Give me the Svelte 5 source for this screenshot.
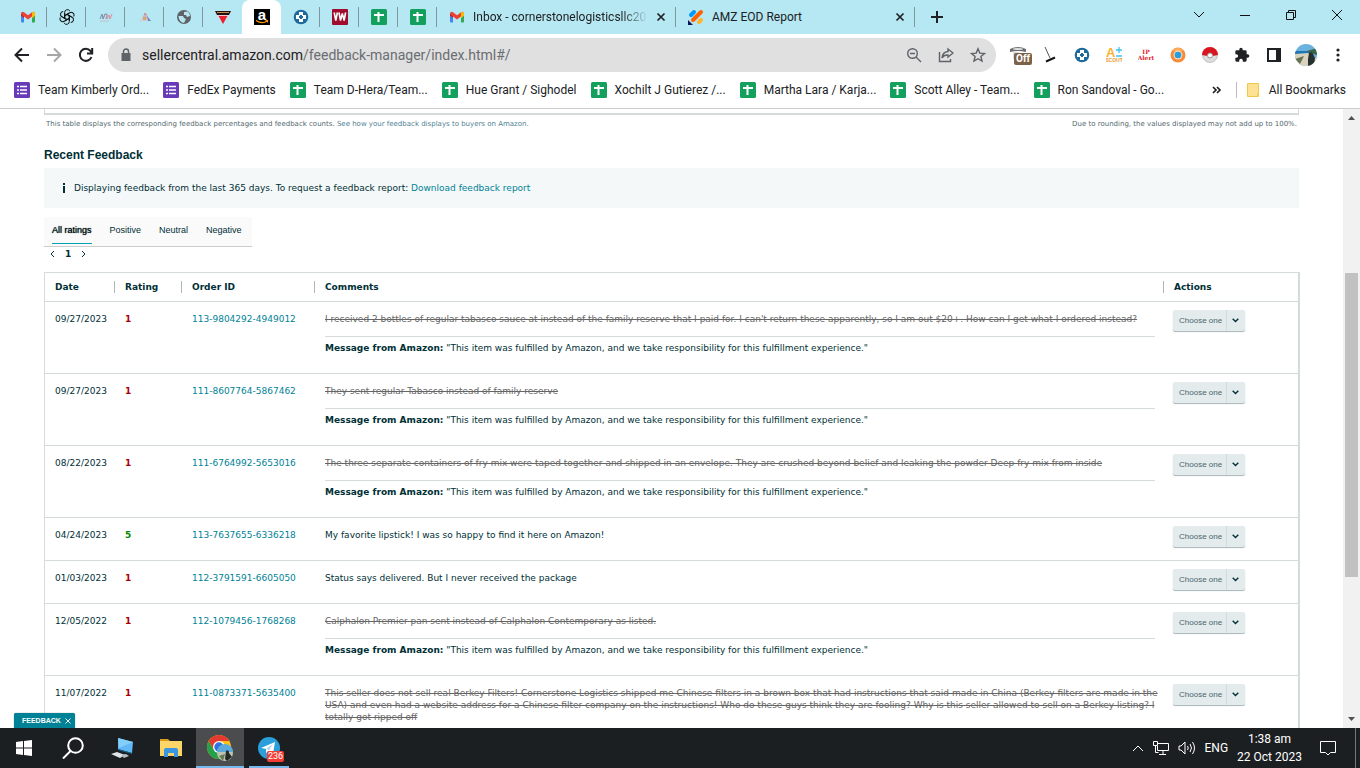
<script>
    const pinned = ['gmail', 'gpt', 'nw', 'spark', 'globe', 'triangle', 'amazon', 'cross', 'vw', 'sheet', 'sheet'];

    const bookmarks = [
        {icon: 'form', label: 'Team Kimberly Ord...'},
        {icon: 'form', label: 'FedEx Payments'},
        {icon: 'sheet', label: 'Team D-Hera/Team...'},
        {icon: 'sheet', label: 'Hue Grant / Sighodel'},
        {icon: 'sheet', label: 'Xochilt J Gutierez /...'},
        {icon: 'sheet', label: 'Martha Lara / Karja...'},
        {icon: 'sheet', label: 'Scott Alley - Team...'},
        {icon: 'sheet', label: 'Ron Sandoval - Go...'}
    ];

    const extensions = ['off', 'broom', 'cross', 'scout', 'alert', 'ring', 'ball', 'puzzle', 'panel', 'avatar', 'dots'];
    const filters = ['All ratings', 'Positive', 'Neutral', 'Negative'];
    const columns = ['Date', 'Rating', 'Order ID', 'Comments', 'Actions'];

    const rows = [
        {date: '09/27/2023', rating: 1, order: '113-9804292-4949012', struck: true, message: true,
            comment: "I received 2 bottles of regular tabasco sauce at instead of the family reserve that I paid for. I can't return these apparently, so I am out $20+. How can I get what I ordered instead?"},
        {date: '09/27/2023', rating: 1, order: '111-8607764-5867462', struck: true, message: true,
            comment: 'They sent regular Tabasco instead of family reserve'},
        {date: '08/22/2023', rating: 1, order: '111-6764992-5653016', struck: true, message: true,
            comment: 'The three separate containers of fry mix were taped together and shipped in an envelope. They are crushed beyond belief and leaking the powder Deep fry mix from inside'},
        {date: '04/24/2023', rating: 5, order: '113-7637655-6336218',
            comment: 'My favorite lipstick! I was so happy to find it here on Amazon!'},
        {date: '01/03/2023', rating: 1, order: '112-3791591-6605050',
            comment: 'Status says delivered. But I never received the package'},
        {date: '12/05/2022', rating: 1, order: '112-1079456-1768268', struck: true, message: true,
            comment: 'Calphalon Premier pan sent instead of Calphalon Contemporary as listed.'},
        {date: '11/07/2022', rating: 1, order: '111-0873371-5635400', struck: true,
            comment: 'This seller does not sell real Berkey Filters! Cornerstone Logistics shipped me Chinese filters in a brown box that had instructions that said made in China (Berkey filters are made in the USA) and even had a website address for a Chinese filter company on the instructions! Who do these guys think they are fooling? Why is this seller allowed to sell on a Berkey listing? I totally got ripped off'}
    ];

    let activeTab = $state(6);
    let filter = $state('All ratings');
    let feedbackOpen = $state(true);
</script>

{#snippet icon(name)}
    {#if name === 'gmail'}
        <svg width="16" height="16" viewBox="0 0 16 16">
            <path d="M1 4v8.500q0 1 1 1h2V7z" fill="#4285f4" />
            <path d="M15 4v8.500q0 1-1 1h-2V7z" fill="#34a853" />
            <path d="M1 4.500v2L4 9V5z" fill="#c5221f" />
            <path d="M15 4.500v2L12 9V5z" fill="#fbbc04" />
            <path d="M1 4.800C1 2.600 2.900 2.200 4 3.200l4 3 4-3c1.100-1 3-.6 3 1.600L12 7.500 8 10.500 4 7.500z" fill="#ea4335" />
            <path d="M12 3.200c1.100-1 3-.6 3 1.600V6.500L12 9z" fill="#fbbc04" />
        </svg>
    {:else if name === 'gpt'}
        <svg width="16" height="16" viewBox="0 0 24 24" fill="none" stroke="#111" stroke-width="1.500">
            {#each [0, 60, 120, 180, 240, 300] as turn}
                <path transform="rotate({turn} 12 12)" d="M8.500 14V5.200a4.200 4.200 0 0 1 7.800-2.200M8.500 10l3.500-2 6.500 3.700" />
            {/each}
        </svg>
    {:else if name === 'nw'}
        <svg width="16" height="16" viewBox="0 0 16 16" fill="none" stroke-width="1">
            <path d="M2 10l2-5 1 5 2-5" stroke="#7f8fae" />
            <path d="M5 10l2-5h2l-1 5" stroke="#8894ad" />
            <path d="M9 5l0 5 2-4 1 4 2-5" stroke="#dc8f9e" />
            <path d="M2 12h9" stroke="#c3bfce" />
        </svg>
    {:else if name === 'spark'}
        <svg width="16" height="16" viewBox="0 0 16 16">
            <path d="M5 9l3-5 2 1 1 5z" fill="#c3b6c9" />
            <path d="M2 12l5-4 6 4z" fill="#c9cfdd" />
            <path d="M6 8h3v3H6z" fill="#e0a25f" />
            <path d="M10 7l4 5h-3z" fill="#7583bb" />
            <circle cx="8" cy="5" r="1" fill="#d78080" />
        </svg>
    {:else if name === 'globe'}
        <svg width="16" height="16" viewBox="0 0 16 16">
            <circle cx="8" cy="8" r="7" fill="#5f6368" />
            <path d="M2.500 7l4.500 0 1 2 2 1-1 2-1 2Q3 13 2.500 7zM8 3l4-.5Q14 5 14 7l-3 1-1-2-2 0z" fill="#b6e7f1" />
        </svg>
    {:else if name === 'triangle'}
        <svg width="16" height="16" viewBox="0 0 16 16">
            <path d="M0 2h16l-2 4H2z" fill="#211" />
            <path d="M2 3h12v1H2z" fill="#c98e4c" />
            <path d="M3 6h10l-5 9z" fill="#ef1c2c" />
            <path d="M3 6h10v1H3z" fill="#f6c9cf" />
        </svg>
    {:else if name === 'amazon'}
        <svg width="16" height="16" viewBox="0 0 16 16">
            <rect width="16" height="16" fill="#000" />
            <text x="8" y="11" text-anchor="middle" class="glyph amazon">a</text>
            <path d="M2 11.500q6 4 11 .5M11.500 11.500h2v2" fill="none" stroke="#f90" stroke-width="1.200" />
        </svg>
    {:else if name === 'cross'}
        <svg width="16" height="16" viewBox="0 0 16 16">
            <circle cx="8" cy="8" r="7.300" fill="#1f6a9c" />
            <path d="M6 3h4v3h3v4h-3v3H6v-3H3V6h3z" fill="#fff" />
            <path d="M7 6h2v1h1v2H9v1H7V9H6V7h1z" fill="#1f6a9c" />
        </svg>
    {:else if name === 'vw'}
        <svg width="16" height="16" viewBox="0 0 16 16">
            <rect width="16" height="16" rx="1" fill="#a00c2c" />
            <path d="M2.200 3.500l1.600 8 1.600-8M7 3.500l1.500 8L10.300 4.500l1.800 7 1.500-8" fill="none" stroke="#fff" stroke-width="1.600" />
        </svg>
    {:else if name === 'sheet'}
        <svg width="16" height="16" viewBox="0 0 16 16">
            <rect width="16" height="16" rx="1.500" fill="#12a05c" />
            <path d="M3 6h10M7.500 3v10" stroke="#fff" stroke-width="2" />
        </svg>
    {:else if name === 'form'}
        <svg width="16" height="16" viewBox="0 0 16 16">
            <rect width="16" height="16" rx="1.500" fill="#673ab7" />
            <path d="M3 4.500h2M6 4.500h7M3 8h2M6 8h7M3 11.500h2M6 11.500h7" stroke="#fff" stroke-width="1.600" />
        </svg>
    {:else if name === 'jot'}
        <svg width="16" height="16" viewBox="0 0 16 16" stroke-width="4" stroke-linecap="round">
            <path d="M3 6l3-3" stroke="#0099ff" />
            <path d="M5 11l8-8" stroke="#ff6100" />
            <path d="M11 13l2-2" stroke="#ffb629" />
            <path d="M0 11v5h5z" fill="#0a1551" stroke="none" />
        </svg>
    {:else if name === 'off'}
        <span class="off">
            <svg width="16" height="16" viewBox="0 0 16 16">
                <path d="M0 4q8-4 16 0v3q-8-2-16 0z" fill="#6d6d6d" />
                <ellipse cx="8" cy="4" rx="5" ry="1" fill="#ddd" />
                <path d="M3 7v7h6V7z" fill="#ddd" />
            </svg>
            <b>Off</b>
        </span>
    {:else if name === 'broom'}
        <svg width="16" height="16" viewBox="0 0 16 16">
            <path d="M3 0l5 11" stroke="#555" fill="none" />
            <path d="M4 14.500l9-4" stroke="#111" stroke-width="2" />
        </svg>
    {:else if name === 'scout'}
        <svg width="16" height="16" viewBox="0 0 16 16">
            <text x="0" y="10" class="glyph scout-a">A</text>
            <path d="M13 0v6M10 3h6M10 9h6" stroke="#3cc4f2" stroke-width="1.300" />
            <text x="8" y="15" text-anchor="middle" class="glyph scout">SCOUT</text>
        </svg>
    {:else if name === 'alert'}
        <svg width="16" height="16" viewBox="0 0 16 16">
            <text x="8" y="7" text-anchor="middle" class="glyph alert">IP</text>
            <text x="8" y="13" text-anchor="middle" class="glyph alert">Alert</text>
        </svg>
    {:else if name === 'ring'}
        <svg width="16" height="16" viewBox="0 0 16 16">
            <circle cx="8" cy="8" r="7.500" fill="#f7893b" />
            <path d="M2 4a7.500 7.500 0 0 1 12 0z" fill="#fcae5b" />
            <circle cx="8" cy="8" r="4.500" fill="#fbd9bd" />
            <circle cx="8" cy="8" r="3.300" fill="#269ed9" />
        </svg>
    {:else if name === 'ball'}
        <svg width="16" height="16" viewBox="0 0 16 16">
            <circle cx="8" cy="8" r="7.500" fill="#ddd" stroke="#999" stroke-width=".5" />
            <path d="M0 8a8 8 0 0 1 16 0q-8 2-16 0z" fill="#d9151f" />
            <circle cx="8" cy="8.500" r="2.500" fill="#fff" stroke="#999" />
        </svg>
    {:else if name === 'puzzle'}
        <svg width="16" height="16" viewBox="0 0 24 24" fill="#202124">
            <path d="M20.500 11H19V7a2 2 0 0 0-2-2h-4V3.500a2.500 2.500 0 0 0-5 0V5H4a2 2 0 0 0-2 2v3.800h1.500a2.700 2.700 0 0 1 0 5.400H2V20a2 2 0 0 0 2 2h3.800v-1.500a2.700 2.700 0 0 1 5.400 0V22H17a2 2 0 0 0 2-2v-4h1.500a2.500 2.500 0 0 0 0-5z" />
        </svg>
    {:else if name === 'panel'}
        <svg width="16" height="16" viewBox="0 0 16 16">
            <path d="M2 2h12v12H2z" fill="none" stroke="#202124" stroke-width="2" />
            <path d="M10 2h4v12h-4z" fill="#202124" />
        </svg>
    {:else if name === 'avatar'}
        <svg width="22" height="22" viewBox="0 0 22 22">
            <clipPath id="face"><circle cx="11" cy="11" r="11" /></clipPath>
            <g clip-path="url(#face)">
                <path d="M0 0h22v22H0z" fill="#6cb2df" />
                <path d="M0 7h16v3H0z" fill="#1e76b5" />
                <path d="M0 10l13-1 9 6v7H0z" fill="#d9d2bd" />
                <path d="M0 15l9-3-4 8z" fill="#647253" />
                <path d="M12 7l10-3v7l-7-2z" fill="#39664a" />
                <path d="M14 9q3-2 4 1l2 4-1 9h-6l0-8z" fill="#26302e" />
            </g>
        </svg>
    {:else if name === 'dots'}
        <svg width="16" height="16" viewBox="0 0 16 16" fill="#202124">
            <circle cx="8" cy="3" r="1.600" /><circle cx="8" cy="8" r="1.600" /><circle cx="8" cy="13" r="1.600" />
        </svg>
    {:else if name === 'close'}
        <svg width="10" height="10" viewBox="0 0 10 10"><path d="M1.500 1.500l7 7M8.500 1.500l-7 7" stroke="#202124" stroke-width="1.700" /></svg>
    {/if}
{/snippet}

<div class="screen">
    <nav class="tabstrip" aria-label="Tabs">
        {#each pinned as name, idx}
            <button class="tab" class:active={activeTab === idx} class:before={activeTab === idx + 1}
                aria-label={name} onclick={() => activeTab = idx}>{@render icon(name)}</button>
        {/each}
        <div class="tab wide">
            {@render icon('gmail')}
            <span class="title fade">Inbox - cornerstonelogisticsllc20</span>
            <button class="close" aria-label="Close tab">{@render icon('close')}</button>
        </div>
        <div class="tab wide">
            {@render icon('jot')}
            <span class="title">AMZ EOD Report</span>
            <button class="close" aria-label="Close tab">{@render icon('close')}</button>
        </div>
        <button class="newtab" aria-label="New tab">
            <svg width="12" height="12" viewBox="0 0 12 12"><path d="M6 0v12M0 6h12" stroke="#202124" stroke-width="2" /></svg>
        </button>
        <div class="controls">
            <button aria-label="Search tabs"><svg width="12" height="12" viewBox="0 0 12 12"><path d="M1 3l5 5 5-5" /></svg></button>
            <button aria-label="Minimize"><svg width="12" height="12" viewBox="0 0 12 12"><path d="M1 6.500h10" /></svg></button>
            <button aria-label="Restore"><svg width="12" height="12" viewBox="0 0 12 12"><path d="M1.500 3.500h7v7h-7zM3.500 3.500v-2h7v7h-2" /></svg></button>
            <button aria-label="Close"><svg width="12" height="12" viewBox="0 0 12 12"><path d="M1 1l10 10M11 1L1 11" /></svg></button>
        </div>
    </nav>

    <div class="toolbar">
        <button class="tool" aria-label="Back">
            <svg width="16" height="16" viewBox="0 0 16 16" class="line dark"><path d="M15 8H2M8 1.500L1.500 8 8 14.500" /></svg>
        </button>
        <button class="tool" aria-label="Forward">
            <svg width="16" height="16" viewBox="0 0 16 16" class="line pale"><path d="M1 8h13M8 1.500L14.500 8 8 14.500" /></svg>
        </button>
        <button class="tool" aria-label="Reload">
            <svg width="16" height="16" viewBox="0 0 16 16" class="line dark"><path d="M13.500 10A6 6 0 1 1 12.500 4l1.500 2M14.200 1v5.500H9" /></svg>
        </button>
        <div class="omnibox">
            <svg width="12" height="14" viewBox="0 0 12 14">
                <path d="M1.500 5h9v8h-9z" fill="#5f6368" /><path d="M3.500 6V3.500a2.500 2.500 0 0 1 5 0V6" fill="none" stroke="#5f6368" stroke-width="1.500" />
            </svg>
            <a class="url" href="#/">sellercentral.amazon.com<span>/feedback-manager/index.html#/</span></a>
            <button class="tool" aria-label="Zoom">
                <svg width="16" height="16" viewBox="0 0 16 16" class="line grey"><circle cx="6.500" cy="6.500" r="4.800" /><path d="M10 10l5 5M4 6.500h5" /></svg>
            </button>
            <button class="tool" aria-label="Share">
                <svg width="16" height="16" viewBox="0 0 16 16" class="line grey"><path d="M1.500 5v9.500h11V12M10 2l5 4-5 4V8Q6 7.500 4 11q.5-6 6-6.500z" /></svg>
            </button>
            <button class="tool" aria-label="Bookmark">
                <svg width="16" height="16" viewBox="0 0 16 16" class="line grey"><path d="M8 1.800l1.800 4.300 4.700.4-3.600 3 1.100 4.600L8 11.700l-4 2.400 1.100-4.600-3.600-3 4.700-.4z" /></svg>
            </button>
        </div>
        {#each extensions as name}
            <button class="tool" aria-label={name}>{@render icon(name)}</button>
        {/each}
    </div>

    <nav class="bookmarks" aria-label="Bookmarks">
        {#each bookmarks as mark}
            <a href="#/">{@render icon(mark.icon)}{mark.label}</a>
        {/each}
        <button class="more" aria-label="More bookmarks">
            <svg width="10" height="8" viewBox="0 0 10 8"><path d="M1 1l3 3-3 3M5 1l3 3-3 3" fill="none" stroke="#202124" stroke-width="1.700" /></svg>
        </button>
        <a class="all" href="#/">
            <svg width="12" height="14" viewBox="0 0 12 14"><path d="M.5.500h11v13H.5z" fill="#fde293" stroke="#eec94d" /><path d="M10 10h2v4h-2z" fill="#f7cf4d" /></svg>
            All Bookmarks
        </a>
    </nav>

    <div class="viewport">
        <main>
            <div class="summary-end"></div>
            <div class="notes">
                <span>This table displays the corresponding feedback percentages and feedback counts. <a href="#/">See how your feedback displays to buyers on Amazon.</a></span>
                <span>Due to rounding, the values displayed may not add up to 100%.</span>
            </div>
            <h2>Recent Feedback</h2>
            <div class="info">
                <svg width="4" height="10" viewBox="0 0 4 10"><path d="M1 0h2v2H1zM1 3h2v7H1z" fill="#002f36" /></svg>
                <span>Displaying feedback from the last 365 days. To request a feedback report: <a href="#/">Download feedback report</a></span>
            </div>
            <div class="filters">
                {#each filters as name}
                    <button class:chosen={filter === name} onclick={() => filter = name}>{name}</button>
                {/each}
            </div>
            <div class="pager">
                <button aria-label="Previous"><svg width="5" height="8" viewBox="0 0 5 8"><path d="M4 1L1 4l3 3" /></svg></button>
                <b>1</b>
                <button aria-label="Next"><svg width="5" height="8" viewBox="0 0 5 8"><path d="M1 1l3 3-3 3" /></svg></button>
            </div>

            <table>
                <thead>
                    <tr>
                        {#each columns as name}
                            <th><span>{name}</span></th>
                        {/each}
                    </tr>
                </thead>
                <tbody>
                    {#each rows as row}
                        <tr class:tall={row.message}>
                            <td>{row.date}</td>
                            <td class="rating" class:good={row.rating > 3}>{row.rating}</td>
                            <td><a href="#/">{row.order}</a></td>
                            <td>
                                {#if row.struck}<s>{row.comment}</s>{:else}{row.comment}{/if}
                                {#if row.message}
                                    <p><b>Message from Amazon:</b> "This item was fulfilled by Amazon, and we take responsibility for this fulfillment experience."</p>
                                {/if}
                            </td>
                            <td class="actions">
                                <label class="choose">
                                    <select aria-label="Action for {row.order}">
                                        <option>Choose one</option>
                                    </select>
                                    <svg width="7" height="5" viewBox="0 0 7 5"><path d="M.7.700l2.800 2.800L6.300.7" fill="none" stroke="#002f36" stroke-width="1.400" /></svg>
                                </label>
                            </td>
                        </tr>
                    {/each}
                </tbody>
            </table>
        </main>

        <div class="scrollbar">
            <svg width="17" height="17" viewBox="0 0 17 17"><path d="M5 11l3.500-4 3.500 4z" fill="#505050" /></svg>
            <div class="thumb"></div>
            <svg width="17" height="17" viewBox="0 0 17 17"><path d="M5 6l3.500 4L12 6z" fill="#505050" /></svg>
        </div>

        {#if feedbackOpen}
            <button class="feedback" onclick={() => feedbackOpen = false}>
                FEEDBACK
                <svg width="6" height="6" viewBox="0 0 6 6"><path d="M.5.500l5 5M5.500.5l-5 5" stroke="#fff" /></svg>
            </button>
        {/if}
    </div>

    <footer class="taskbar">
        <button class="app" aria-label="Start">
            <svg width="16" height="16" viewBox="0 0 16 16" fill="#fff"><path d="M0 2l7-1v6.500H0zM8 1l8-1v7.500H8zM0 8.500h7V15l-7-1zM8 8.500h8V16l-8-1z" /></svg>
        </button>
        <button class="app" aria-label="Search">
            <svg width="22" height="22" viewBox="0 0 22 22" fill="none" stroke="#fff" stroke-width="2"><circle cx="13.500" cy="8.500" r="7.300" /><path d="M8.500 14L1 21.500" /></svg>
        </button>
        <button class="app" aria-label="This PC">
            <svg width="24" height="22" viewBox="0 0 24 22">
                <path d="M8 1l15 4-1 11-14-4z" fill="#61b8f5" /><path d="M8 1l15 4-14 6z" fill="#83cdf9" />
                <path d="M8 12l14 4v1L8 13z" fill="#146c9b" />
                <path d="M1 17l6-2 8 3-5 3z" fill="#dfe5e8" /><path d="M11 18l5-1 3 2-5 2z" fill="#b5c0c5" />
            </svg>
        </button>
        <button class="app" aria-label="File Explorer">
            <svg width="22" height="20" viewBox="0 0 22 20">
                <path d="M0 1h8l2 2H0z" fill="#d99c1d" /><path d="M0 3h22v15H0z" fill="#fcd568" />
                <path d="M4 19v-7q0-2 2-2h10q2 0 2 2v7h-4v-4H8v4z" fill="#3a96e0" />
            </svg>
        </button>
        <button class="app current" aria-label="Chrome">
            <svg width="28" height="28" viewBox="0 0 28 28">
                <circle cx="13" cy="13" r="12" fill="#fbc116" />
                <path d="M2.600 7A12 12 0 0 1 23.400 7H13L7.800 16z" fill="#e33b2e" />
                <path d="M2.600 7A12 12 0 0 0 13 25l5-9H7.800z" fill="#25a14a" />
                <circle cx="13" cy="13" r="6" fill="#fff" /><circle cx="13" cy="13" r="4.700" fill="#2f73dc" />
                <circle cx="19" cy="19" r="8" fill="#bfc4b0" />
                <path d="M11 18a8 8 0 0 1 16 0z" fill="#5baadb" /><path d="M13 22l6-2-2 7z" fill="#637a54" />
                <path d="M20 17q3-2 3 2l3 4-5 4-2-2z" fill="#202a27" />
            </svg>
        </button>
        <button class="app running" aria-label="Telegram, 236 unread">
            <svg width="22" height="22" viewBox="0 0 22 22"><circle cx="11" cy="11" r="11" fill="#2a9fd9" /><path d="M3 11l14-6-2 12-4-3-3 2v-4z" fill="#fff" /><path d="M8 12l7-5-4 6z" fill="#a9d4eb" /></svg>
            <span class="count">236</span>
        </button>

        <div class="tray">
            <svg width="12" height="8" viewBox="0 0 12 8"><path d="M1 7l5-5 5 5" /></svg>
            <svg width="16" height="14" viewBox="0 0 16 14"><path d="M5 2.500h10.500v7H4.500V5M10 10v3M6 13.500h7M.5.500h4v4h-4zM2.500 5v6.500h3" /></svg>
            <svg width="18" height="14" viewBox="0 0 18 14"><path d="M1 5v4h2l4 4V1L3 5zM9.500 5q1.500 2 0 4M12 3q3 4 0 8M14.500 1q4 6 0 12" /></svg>
            <span>ENG</span>
            <time>1:38 am<br>22 Oct 2023</time>
            <svg class="notice" width="16" height="16" viewBox="0 0 16 16"><path d="M.5 1.500h15v11h-5L8 15l-2.500-2.500h-5z" /></svg>
            <i></i>
        </div>
    </footer>
</div>

<style>
    :global(body) {
        margin: 0;
    }

    .screen {
        display: flex;
        flex-direction: column;
        height: 100vh;
        overflow: hidden;
        background: #fff;
        color: #202124;
        font: 12px/16px Roboto, "Noto Sans", sans-serif;
    }

    button {
        display: flex;
        align-items: center;
        justify-content: center;
        padding: 0;
        border: 0;
        background: none;
        color: inherit;
        font: inherit;
    }

    a {
        color: inherit;
        text-decoration: none;
    }

    svg {
        flex: none;
    }

    .glyph {
        font-family: "Liberation Sans", sans-serif;
        font-weight: bold;
    }

    .amazon {
        fill: #fff;
        font-size: 15px;
    }

    .scout-a {
        fill: #f9b233;
        font-size: 13px;
    }

    .scout {
        fill: #f0962e;
        font-size: 5px;
    }

    .alert {
        fill: #e3232e;
        font-family: "DejaVu Serif", serif;
        font-size: 6px;
    }

    .tabstrip {
        display: flex;
        flex: none;
        height: 34px;
        padding-left: 8px;
        background: #b5e8f2;
    }

    .tab {
        position: relative;
        display: flex;
        align-items: center;
        width: 39px;
        box-sizing: border-box;
    }

    .tab::after {
        content: "";
        position: absolute;
        right: 0;
        top: 7px;
        width: 1px;
        height: 20px;
        background: #81969c;
    }

    .tab.before::after,
    .tab.active::after {
        display: none;
    }

    .tab.active {
        background: #fff;
        border-radius: 8px 8px 0 0;
    }

    .tab.wide {
        width: 239px;
        padding: 0 10px 0 12px;
        gap: 8px;
    }

    .title {
        flex: 1;
        overflow: hidden;
        white-space: nowrap;
    }

    .fade {
        mask-image: linear-gradient(to right, #000 85%, transparent);
    }

    .newtab {
        width: 44px;
    }

    .controls {
        display: flex;
        align-items: flex-start;
        margin-left: auto;
    }

    .controls button {
        width: 46px;
        height: 29px;
    }

    .controls svg {
        fill: none;
        stroke: #111;
    }

    .toolbar {
        display: flex;
        flex: none;
        align-items: center;
        height: 42px;
        padding: 0 6px;
    }

    .tool {
        flex: none;
        width: 32px;
        height: 32px;
    }

    .line {
        fill: none;
        stroke-width: 2;
    }

    .dark {
        stroke: #202124;
    }

    .pale {
        stroke: #a5a6a8;
    }

    .grey {
        stroke: #5f6368;
        stroke-width: 1.4;
    }

    .omnibox {
        display: flex;
        flex: 1;
        align-items: center;
        height: 34px;
        margin: 0 6px;
        padding: 0 2px 0 12px;
        border-radius: 17px;
        background: #e0e0e0;
    }

    .url {
        flex: 1;
        margin-left: 10px;
        font-size: 14px;
    }

    .url span {
        color: #6a6d71;
    }

    .off {
        position: relative;
    }

    .off b {
        position: absolute;
        left: 4px;
        top: 8px;
        padding: 0 2px;
        border-radius: 2px;
        background: #7b6248;
        color: #fff;
        font-size: 10px;
        line-height: 12px;
    }

    .bookmarks {
        display: flex;
        flex: none;
        align-items: center;
        gap: 14px;
        height: 28px;
        padding: 0 14px 4px;
        border-bottom: 1px solid #ccc;
        white-space: nowrap;
    }

    .bookmarks a {
        display: flex;
        align-items: center;
        gap: 8px;
    }

    .more {
        margin-left: auto;
    }

    .bookmarks .all {
        height: 16px;
        padding-left: 10px;
        border-left: 1px solid #bbb;
        gap: 10px;
    }

    .viewport {
        position: relative;
        display: flex;
        flex: 1;
        min-height: 0;
        overflow: hidden;
        font: 9px/12px "DejaVu Sans", Verdana, sans-serif;
        color: #002f36;
    }

    main {
        flex: 1;
        padding: 0 44px;
    }

    .viewport a {
        color: #008296;
    }

    .summary-end {
        height: 4px;
        border: solid #d5dbdb;
        border-width: 0 1px 2px;
    }

    .notes {
        display: flex;
        justify-content: space-between;
        padding: 3px 2px 0;
        color: #546a6f;
        font-size: 7px;
    }

    .viewport .notes a {
        color: #4f7f94;
    }

    h2 {
        margin: 17px 0 5px;
        font: bold 12px/16px "Liberation Sans", Arial, sans-serif;
    }

    .info {
        display: flex;
        align-items: center;
        gap: 8px;
        height: 40px;
        padding-left: 18px;
        background: #f4f8f9;
    }

    .filters {
        display: flex;
        gap: 18px;
        width: fit-content;
        margin-top: 9px;
        padding: 0 10px 2px 8px;
        border-bottom: 1px solid #ccc;
        background: #fafafa;
        font: 9px/12px "Liberation Sans", Arial, sans-serif;
    }

    .filters button {
        height: 27px;
        border-bottom: 1px solid transparent;
    }

    .filters .chosen {
        border-color: #00a1b3;
        text-shadow: 0 0 1px #002f36;
        color: #000;
    }

    .pager {
        display: flex;
        align-items: center;
        gap: 10px;
        height: 14px;
        margin-bottom: 11px;
        padding-left: 6px;
    }

    .pager svg {
        fill: none;
        stroke: #002f36;
    }

    table {
        width: 100%;
        border: 1px solid #d5dbdb;
        border-spacing: 0;
        box-shadow: 1px 0 #d5dbdb;
        table-layout: fixed;
    }

    th,
    td {
        padding: 11px 0 0 10px;
        border-bottom: 1px solid #d5dbdb;
        box-sizing: border-box;
        text-align: left;
        vertical-align: top;
    }

    th {
        height: 29px;
        padding: 8px 0 0;
    }

    th span {
        display: block;
        padding-left: 10px;
        border-right: 1px solid #aab7b8;
    }

    th:last-child span {
        border: 0;
    }

    th:nth-child(1) {
        width: 70px;
    }

    th:nth-child(2) {
        width: 67px;
    }

    th:nth-child(3) {
        width: 133px;
    }

    th:nth-child(5) {
        width: 134px;
    }

    td {
        height: 43px;
    }

    .tall td {
        height: 72px;
    }

    tr:last-child td {
        padding-bottom: 16px;
    }

    .rating {
        color: #a00;
        font-weight: bold;
    }

    .good {
        color: #080;
    }

    s {
        color: #666;
    }

    p {
        margin: 11px 9px 0 0;
        padding-top: 5px;
        border-top: 1px solid #d5dbdb;
    }

    .actions {
        padding: 8px 0 0 9px;
    }

    .choose {
        display: grid;
        grid-template-columns: 53px 19px;
        align-items: center;
        width: 72px;
        height: 21px;
        border-radius: 2px;
        background: #e3ebed;
        box-shadow: 0 1px 1px #a9b5b7;
    }

    .choose select {
        grid-area: 1 / 1 / 2 / 3;
        height: 21px;
        padding: 0 0 0 6px;
        border: 0;
        background: linear-gradient(#d1dcde, #d1dcde) 53px 0 / 1px 100% no-repeat;
        appearance: none;
        color: #4b666b;
        font: 8px/12px "Liberation Sans", Arial, sans-serif;
    }

    .choose svg {
        grid-area: 1 / 2;
        justify-self: center;
        pointer-events: none;
    }

    .scrollbar {
        display: flex;
        flex-direction: column;
        width: 17px;
        background: #f1f1f1;
    }

    .scrollbar::before,
    .scrollbar::after {
        content: "";
    }

    .scrollbar svg:first-child {
        order: -1;
    }

    .scrollbar svg:last-child {
        order: 1;
    }

    .scrollbar::before {
        flex: 147;
    }

    .scrollbar::after {
        flex: 134;
    }

    .thumb {
        flex: 304;
        margin: 0 2px;
        background: #c1c1c1;
    }

    .feedback {
        position: absolute;
        left: 14px;
        bottom: 0;
        gap: 4px;
        height: 15px;
        padding: 0 4px 0 8px;
        border-radius: 2px 2px 0 0;
        background: #008296;
        box-shadow: 0 0 1px #555;
        color: #fff;
        font: bold 7px/12px "Liberation Sans", Arial, sans-serif;
    }

    .taskbar {
        display: flex;
        flex: none;
        gap: 1px;
        height: 40px;
        background: #1c1f21;
        color: #fff;
    }

    .app {
        position: relative;
        width: 48px;
    }

    .current {
        background: #4a4c4e;
        box-shadow: inset 0 -2px #76b9ed;
    }

    .running::after {
        content: "";
        position: absolute;
        bottom: 0;
        width: 40px;
        height: 2px;
        background: #76b9ed;
    }

    .count {
        position: absolute;
        left: 22px;
        top: 23px;
        padding: 0 1px;
        border-radius: 2px;
        background: #f23c34;
        font-size: 9px;
        line-height: 11px;
    }

    .tray {
        display: flex;
        align-items: center;
        gap: 9px;
        margin-left: auto;
    }

    .tray svg {
        fill: none;
        stroke: #fff;
    }

    .tray time {
        line-height: 18px;
        text-align: center;
    }

    .tray .notice {
        margin: 0 10px 0 9px;
    }

    .tray i {
        align-self: stretch;
        width: 4px;
        border-left: 1px solid #777;
    }
</style>
